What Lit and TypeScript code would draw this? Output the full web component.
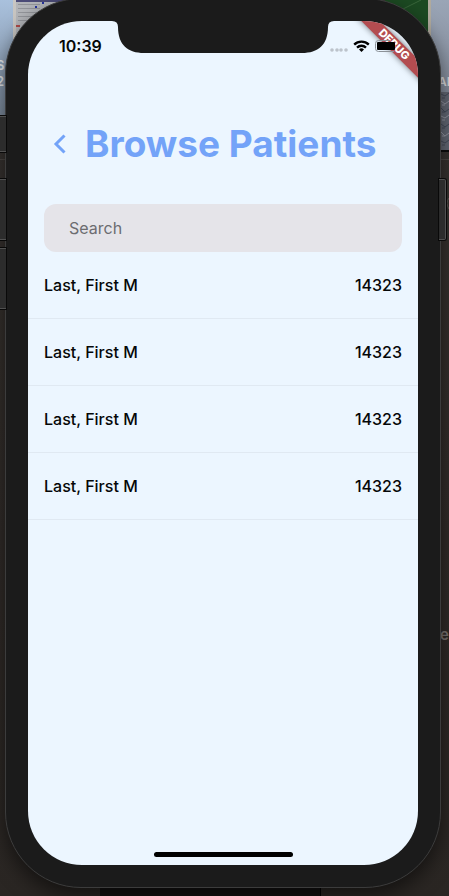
import { LitElement, html, css, svg } from "lit";
import { customElement, property } from "lit/decorators.js";

interface Patient {
  name: string;
  id: string;
}

@customElement("desktop-backdrop")
class DesktopBackdrop extends LitElement {
  static styles = css`
    :host {
      position: absolute;
      inset: 0;
      overflow: hidden;
      background: linear-gradient(#383431, #302b28 60%, #2a2623);
      font-family: Inter, "Liberation Sans", sans-serif;
    }
    .left,
    .right {
      position: absolute;
      top: 0;
    }
    .left {
      left: 0;
    }
    .right {
      right: 0;
    }
    .foot {
      position: absolute;
      left: 100px;
      bottom: 0;
      width: 220px;
      height: 10px;
      background: #131211;
      border-right: 1px solid #000;
    }
  `;

  render() {
    return html`
      <svg class="left" width="90" height="320" aria-hidden="true">
        <defs>
          <linearGradient id="sky" x1="0" y1="0" x2="0" y2="1">
            <stop offset="0" stop-color="#a9c1dd" />
            <stop offset="1" stop-color="#7a8899" />
          </linearGradient>
        </defs>
        <rect width="90" height="115" fill="url(#sky)" />
        <rect x="13" width="77" height="60" fill="#c9c6c2" />
        <rect x="16" width="74" height="60" fill="#b4b6ba" />
        <rect x="16" width="74" height="2" fill="#4c4c78" />
        ${[4, 8, 12, 16, 20].map(
          (y) => svg`<rect x="18" y=${y} width="22" height="1" fill="#94969b" />`
        )}
        <rect x="42" y="2" width="2" height="2" fill="#2634a0" />
        <rect x="35" y="6" width="2" height="2" fill="#2634a0" />
        <rect x="16" y="25" width="4" height="2" fill="#b04a48" />
        <text x="-4" y="70" font-size="13" font-weight="600" fill="#e4e6e8">S</text>
        <text x="-4" y="86" font-size="13" font-weight="600" fill="#e4e6e8">2</text>
        <rect y="159" width="6" height="1" fill="#4a4542" />
      </svg>
      <svg class="right" width="64" height="700" aria-hidden="true">
        <defs>
          <linearGradient id="wall" x1="0" y1="0" x2="0" y2="1">
            <stop offset="0" stop-color="#9aa5b6" />
            <stop offset="1" stop-color="#747b88" />
          </linearGradient>
        </defs>
        <rect width="64" height="150" fill="url(#wall)" />
        <rect width="43" height="60" fill="#1c4a22" />
        <path d="M8 14 36 0" stroke="#39663b" />
        <rect x="43" width="3" height="60" fill="#b0aa9d" />
        <rect x="55" y="92" width="9" height="58" fill="#626773" />
        ${[94, 101, 108, 116, 124, 132, 141].map(
          (y, i) =>
            svg`<path d="M56 ${y}l4 ${2 + (i % 3)} 4-3M57 ${y + 4}h3" stroke=${i % 2 ? "#9295a0" : "#444a58"} fill="none" />`
        )}
        <text x="53" y="86" font-size="12" font-weight="600" fill="#d8dadd">AN</text>
        <rect x="55" y="150" width="9" height="2" fill="#0c0c0c" />
        <rect x="55" y="159" width="9" height="1" fill="#4a4542" />
        <path d="M64 198q-4 5 0 11" stroke="#57524f" fill="none" />
        <text x="55" y="640" font-size="15" font-weight="600" fill="#77726f">e</text>
      </svg>
      <div class="foot"></div>
    `;
  }
}

@customElement("status-bar")
class StatusBar extends LitElement {
  static styles = css`
    :host {
      display: flex;
      justify-content: space-between;
      align-items: center;
      height: 50px;
      padding: 0 18px 0 31px;
      font: 600 16px/20px Inter, "Liberation Sans", sans-serif;
      color: #050708;
    }
    .signals {
      display: flex;
      align-items: center;
      gap: 5px;
    }
    svg {
      display: block;
    }
  `;

  render() {
    return html`
      <time>10:39</time>
      <div class="signals">
        <svg width="18" height="12" role="img" aria-label="No signal">
          ${[2, 7, 11, 16].map(
            (x) => svg`<circle cx=${x} cy="10" r="1.8" fill="#bcc3cb" />`
          )}
        </svg>
        <svg width="17" height="12" viewBox="0 0 17 12" role="img" aria-label="Wi-Fi">
          <g fill="none" stroke="#000" stroke-width="2.3">
            <path d="M1.2 4.6A10.4 10.4 0 0 1 15.8 4.6" />
            <path d="M4 7.6A6.4 6.4 0 0 1 13 7.6" />
          </g>
          <path d="M8.5 11.9 6 9.5a3.6 3.6 0 0 1 5 0Z" />
        </svg>
        <svg width="25" height="12" viewBox="0 0 25 12" role="img" aria-label="Battery full">
          <path d="M15 .5H3.500Q.5.5.5 3.500V8.500Q.5 11.500 3.500 11.500H19" fill="none" stroke="#8c9298" />
          <rect x="2" y="2" width="18" height="8" rx="1" />
        </svg>
      </div>
    `;
  }
}

@customElement("patient-list")
class PatientList extends LitElement {
  @property({ attribute: false }) patients: Patient[] = [];

  static styles = css`
    :host {
      display: block;
    }
    ul {
      list-style: none;
      margin: 0;
      padding: 0;
    }
    li {
      display: flex;
      justify-content: space-between;
      align-items: center;
      box-sizing: border-box;
      height: 67px;
      padding: 0 16px;
      border-bottom: 1px solid #e0e9f2;
      font: 500 16px/20px Inter, "Liberation Sans", sans-serif;
      color: #050708;
    }
  `;

  render() {
    return html`
      <ul>
        ${this.patients.map(
          (p) => html`<li><span>${p.name}</span><span>${p.id}</span></li>`
        )}
      </ul>
    `;
  }
}

@customElement("app-root")
class AppRoot extends LitElement {
  private patients: Patient[] = Array.from({ length: 4 }, () => ({
    name: "Last, First M",
    id: "14323",
  }));

  static styles = css`
    :host {
      display: block;
      font-family: Inter, "Liberation Sans", sans-serif;
    }
    .desktop {
      position: relative;
      display: flex;
      box-sizing: border-box;
      min-height: 100vh;
      padding: 0 8px 8px 5px;
      overflow: hidden;
    }
    .phone {
      position: relative;
      flex: 1;
      display: flex;
      box-sizing: border-box;
      margin-top: -2px;
      padding: 22px;
      border: 1px solid #3c3c3c;
      border-radius: 76px;
      background: #1b1b1b;
      box-shadow: 0 8px 20px #0008;
    }
    .key {
      position: absolute;
      box-sizing: border-box;
      width: 7px;
      height: 61px;
      border: 1px solid #505050;
      background: #2c2c2c;
      box-shadow: 0 0 0 1px #090909;
    }
    .mute,
    .up,
    .down {
      left: -7px;
      border-right: 0;
    }
    .mute {
      top: 117px;
      height: 36px;
    }
    .up {
      top: 180px;
    }
    .down {
      top: 249px;
    }
    .power {
      right: -6px;
      top: 180px;
      border-left: 0;
      border-radius: 0 2px 2px 0;
    }
    .screen {
      position: relative;
      flex: 1;
      display: flex;
      flex-direction: column;
      overflow: hidden;
      border-radius: 54px;
      background: #ecf6ff;
    }
    status-bar {
      position: relative;
      z-index: 1;
    }
    .notch {
      position: absolute;
      top: 0;
      left: 50%;
      transform: translateX(-50%);
    }
    .debug {
      position: absolute;
      top: 17px;
      right: -28px;
      width: 104px;
      transform: rotate(45deg);
      background: #b34c50;
      box-shadow: 0 0 6px #0008;
      color: #fff;
      text-align: center;
      font: 800 11px/13px Inter, "Liberation Sans", sans-serif;
    }
    header {
      display: flex;
      align-items: center;
      gap: 10px;
      padding: 49px 16px 36px;
    }
    .back {
      display: grid;
      place-items: center;
      width: 31px;
      height: 48px;
      padding: 0;
      border: 0;
      background: none;
      color: #73a3f8;
    }
    h1 {
      margin: 0;
      font-size: 37px;
      line-height: 48px;
      font-weight: 700;
      color: #73a3f8;
      white-space: nowrap;
    }
    input {
      box-sizing: border-box;
      height: 48px;
      margin: 0 16px;
      padding: 0 25px;
      border: 0;
      border-radius: 12px;
      background: #e5e4e9;
      font: 400 16px/20px Inter, "Liberation Sans", sans-serif;
      color: #050708;
    }
    input::placeholder {
      color: #6c6c70;
      opacity: 1;
    }
    .home {
      width: 139px;
      height: 5px;
      margin: auto auto 8px;
      border-radius: 3px;
      background: #000;
    }
  `;

  render() {
    return html`
      <div class="desktop">
        <desktop-backdrop></desktop-backdrop>
        <div class="phone">
          <div class="key mute"></div>
          <div class="key up"></div>
          <div class="key down"></div>
          <div class="key power"></div>
          <main class="screen">
            <status-bar></status-bar>
            <svg class="notch" width="222" height="32" aria-hidden="true">
              <path
                d="M0 0H222Q216 0 216 6C216 24 206 32 190 32H32C16 32 6 24 6 6Q6 0 0 0Z"
                fill="#1b1b1b"
              />
            </svg>
            <header>
              <button class="back" aria-label="Back">
                <svg width="14" height="20" viewBox="0 0 14 20">
                  <path d="M11.500 1.500 3 10l8.500 8.500" fill="none" stroke="currentColor" stroke-width="3" />
                </svg>
              </button>
              <h1>Browse Patients</h1>
            </header>
            <input type="search" placeholder="Search" aria-label="Search" />
            <patient-list .patients=${this.patients}></patient-list>
            <div class="home"></div>
            <div class="debug">DEBUG</div>
          </main>
        </div>
      </div>
    `;
  }
}
